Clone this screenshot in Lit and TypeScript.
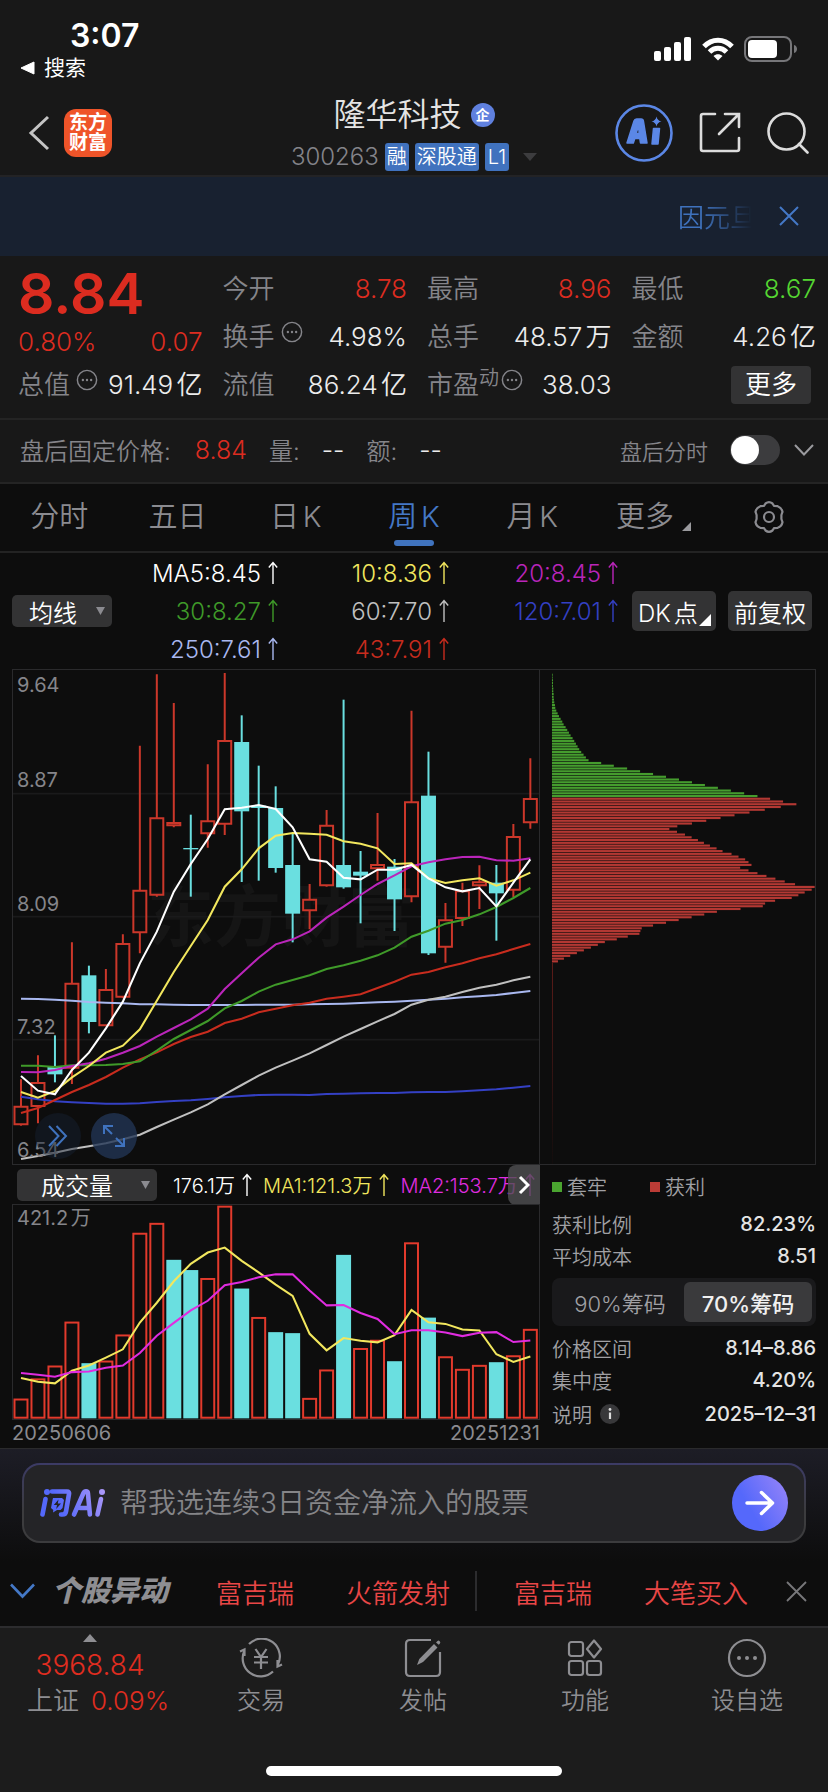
import { LitElement, html, svg, css, nothing } from "lit";
import { customElement, state } from "lit/decorators.js";
import { classMap } from "lit/directives/class-map.js";

type Candle = [top: number, bottom: number, high: number, low: number, up: 0 | 1];

/* Chart units: one third of a pixel, first candle centred at 62, step 51. */
const X0 = 62;
const STEP = 51;
const BODY = 43;

const CANDLES: Candle[] = [
  [1338, 1395, 1258, 1397, 1], [1267, 1340, 1186, 1390, 1], [1221, 1243, 1126, 1267, 0],
  [969, 1225, 847, 1272, 1], [946, 1086, 917, 1120, 0], [988, 1098, 927, 1098, 1],
  [850, 1012, 823, 1015, 1], [690, 819, 257, 880, 1], [473, 706, 43, 710, 1],
  [487, 498, 129, 502, 1], [564, 568, 464, 710, 0], [482, 522, 313, 563, 1],
  [241, 493, 39, 525, 1], [246, 454, 166, 666, 0], [437, 444, 317, 662, 0],
  [444, 624, 379, 638, 0], [615, 761, 522, 847, 0], [717, 753, 672, 808, 1],
  [495, 678, 450, 680, 1], [615, 682, 119, 686, 0], [635, 647, 573, 790, 0],
  [613, 627, 459, 662, 1], [620, 718, 597, 813, 0], [425, 711, 152, 727, 1],
  [407, 880, 275, 885, 0], [779, 862, 729, 908, 1], [692, 776, 668, 798, 1],
  [665, 678, 616, 747, 1], [668, 700, 615, 842, 0], [529, 691, 492, 712, 1],
  [415, 489, 295, 506, 1],
];

const AVERAGES: { color: string; points: number[] }[] = [
  { color: "#a9b8f0", points: [1016, 1017, 1019, 1022, 1026, 1028, 1030, 1033, 1033, 1034, 1035, 1035, 1035, 1035, 1034, 1034, 1034, 1033, 1032, 1031, 1029, 1027, 1025, 1022, 1019, 1016, 1012, 1009, 1005, 999, 993] },
  { color: "#3440c4", points: [1310, 1318, 1324, 1327, 1329, 1331, 1331, 1330, 1326, 1323, 1321, 1317, 1312, 1308, 1305, 1304, 1304, 1305, 1302, 1301, 1300, 1299, 1299, 1297, 1296, 1296, 1294, 1291, 1288, 1283, 1278] },
  { color: "#c0c0c0", points: [1497, 1488, 1478, 1467, 1459, 1450, 1438, 1424, 1401, 1379, 1357, 1333, 1303, 1275, 1247, 1223, 1202, 1180, 1155, 1130, 1107, 1084, 1062, 1034, 1019, 1010, 996, 983, 974, 961, 950] },
  { color: "#c82c1e", points: [1359, 1344, 1320, 1296, 1275, 1251, 1223, 1198, 1177, 1152, 1131, 1115, 1089, 1076, 1057, 1046, 1036, 1028, 1016, 1010, 1003, 984, 965, 944, 936, 922, 910, 895, 883, 867, 852] },
  { color: "#3f9a29", points: [1217, 1217, 1221, 1216, 1216, 1215, 1212, 1204, 1172, 1137, 1110, 1083, 1045, 1023, 995, 974, 960, 946, 927, 916, 902, 886, 863, 830, 812, 791, 780, 763, 741, 714, 684] },
  { color: "#ba25ba", points: [1236, 1237, 1230, 1218, 1210, 1196, 1178, 1158, 1130, 1104, 1078, 1046, 987, 940, 893, 853, 838, 814, 773, 740, 705, 672, 646, 619, 607, 598, 591, 590, 601, 602, 595] },
  { color: "#f2e75e", points: [1296, 1313, 1293, 1252, 1218, 1178, 1157, 1108, 1022, 936, 858, 780, 680, 628, 565, 527, 519, 521, 524, 544, 551, 565, 612, 610, 655, 669, 661, 655, 677, 661, 638] },
  { color: "#ffffff", points: [1248, 1292, 1303, 1230, 1178, 1105, 1025, 910, 815, 695, 612, 537, 448, 443, 435, 447, 502, 598, 605, 653, 658, 629, 629, 615, 655, 682, 694, 684, 739, 668, 598] },
];

const VOLUMES = [718, 657, 618, 485, 610, 603, 524, 216, 186, 297, 328, 353, 134, 384, 471, 516, 519, 716, 630, 282, 565, 540, 604, 245, 472, 590, 628, 616, 607, 587, 507];
const VOLUME_DOWN = new Set([4, 9, 10, 13, 15, 16, 19, 22, 24, 28]);
const VOLUME_LINES = [
  { color: "#f2e75e", points: [655, 666, 671, 633, 617, 593, 568, 487, 427, 362, 309, 275, 260, 300, 335, 372, 406, 521, 571, 534, 542, 547, 525, 449, 486, 491, 508, 511, 583, 606, 590] },
  { color: "#e02ce0", points: [640, 645, 651, 637, 635, 624, 617, 579, 527, 488, 450, 421, 374, 364, 350, 341, 341, 390, 435, 434, 458, 476, 522, 510, 510, 517, 528, 518, 516, 546, 541] },
];

/* Chip distribution, from the highest price to the lowest. */
const CHIPS_TRAPPED = [2, 2, 3, 3, 3, 4, 4, 5, 5, 6, 7, 9, 10, 13, 17, 21, 26, 31, 35, 41, 46, 51, 56, 62, 67, 72, 77, 82, 88, 95, 102, 110, 148, 186, 226, 265, 304, 343, 382, 421, 460, 499, 538, 578, 618];
const CHIPS_PROFIT = [656, 695, 735, 688, 640, 594, 549, 507, 464, 421, 377, 353, 376, 400, 420, 439, 457, 475, 495, 513, 540, 561, 581, 591, 600, 566, 591, 618, 645, 672, 700, 731, 790, 781, 760, 741, 721, 671, 641, 634, 567, 496, 458, 420, 381, 343, 304, 270, 266, 263, 228, 195, 159, 138, 117, 96, 75, 55, 36, 18];
const CHIP_STEP = 8.27;

const line = (points: number[]) => points.map((y, i) => `${X0 + STEP * i},${y}`).join(" ");

const upArrow = html`<svg class="up" viewBox="0 0 10 24" aria-hidden="true">
  <path d="M5 23V1.5M.8 6.5 5 1.5l4.2 5" fill="none" stroke="currentColor" stroke-width="1.4" />
</svg>`;

const caret = html`<svg width="9" height="8" viewBox="0 0 9 8" aria-hidden="true"><path d="M0 0h9L4.500 8z" fill="#8b8b90" /></svg>`;

const moreDots = html`<svg class="dots" viewBox="0 0 24 24" aria-hidden="true">
  <circle cx="12" cy="12" r="10.5" fill="none" stroke="currentColor" stroke-width="1.6" />
  <circle cx="7.5" cy="12" r="1.3" fill="currentColor" /><circle cx="12" cy="12" r="1.3" fill="currentColor" /><circle cx="16.5" cy="12" r="1.3" fill="currentColor" />
</svg>`;

const base = css`
  * { box-sizing: border-box; }
  button, input { font: inherit; color: inherit; letter-spacing: inherit; background: none; border: 0; margin: 0; padding: 0; }
  button { cursor: pointer; }
  a { color: inherit; text-decoration: none; }
  svg { display: block; flex: none; }
`;

@customElement("app-header")
class AppHeader extends LitElement {
  static styles = [base, css`
    :host { display: block; background: #181818; }
    .status { display: flex; justify-content: space-between; padding: 18px 30px 0 20px; height: 82px; }
    .time { padding-left: 50px; font-size: 32px; font-weight: 600; line-height: 36px; color: #fff; }
    .back-app { display: flex; align-items: center; gap: 8px; font-size: 21px; line-height: 28px; font-weight: 400; color: #fff; }
    .signals { display: flex; align-items: center; gap: 10px; height: 26px; margin-top: 18px; }
    .bar { display: grid; grid-template-columns: 1fr auto 1fr; align-items: center; height: 95px; padding: 8px 19px 0; border-bottom: 2px solid #232325; }
    .left { display: flex; align-items: center; gap: 14px; padding-left: 9px; }
    .logo { display: grid; align-content: center; justify-items: center; width: 48px; height: 48px; border-radius: 12px; background: #ef5429; color: #fff; font-size: 19px; line-height: 20px; font-weight: 700; }
    .center { display: grid; justify-items: center; row-gap: 9px; padding-top: 2px; }
    .name { display: flex; align-items: center; gap: 9px; margin: 0; font-size: 32px; line-height: 38px; font-weight: 350; color: #e4e4e4; }
    .ent { display: grid; place-items: center; width: 24px; height: 24px; border-radius: 50%; background: #5f80de; color: #fff; font-size: 14px; line-height: 16px; font-weight: 700; }
    .code { display: flex; align-items: center; gap: 6px; font-size: 24px; line-height: 28px; color: #84848a; font-weight: 350; }
    .tag { padding: 0 2px; border-radius: 3px; background: #4072be; color: #fff; font-size: 20px; line-height: 28px; }
    .tag.mono { padding: 0 3px; }
    .gap { margin-left: 8px; }
    .right { display: flex; align-items: center; justify-content: flex-end; gap: 26px; }
    .banner { display: flex; align-items: center; justify-content: flex-end; gap: 23px; height: 79px; padding: 0 29px 2px 0; background: #182130; color: #3f72bd; font-size: 26px; font-weight: 350; }
    .notice { white-space: nowrap; -webkit-mask-image: linear-gradient(90deg, #000 30%, transparent 95%); mask-image: linear-gradient(90deg, #000 30%, transparent 95%); }
  `];

  render() {
    return html`
      <div class="status">
        <div>
          <div class="time">3:07</div>
          <a class="back-app" href="#search"><svg width="16" height="14" viewBox="0 0 16 14"><path d="M1 7 14 1v12z" fill="#fff" stroke="#fff" stroke-linejoin="round" /></svg>搜索</a>
        </div>
        <div class="signals">
          <svg width="38" height="24" viewBox="0 0 38 24" fill="#fff"><rect x="0" y="14" width="7" height="10" rx="2" /><rect x="10" y="10" width="7" height="14" rx="2" /><rect x="20" y="5" width="7" height="19" rx="2" /><rect x="30" y="0" width="7" height="24" rx="2" /></svg>
          <svg width="32" height="24" viewBox="0 0 32 24" fill="none" stroke="#fff" stroke-width="5"><path d="M2 9.5C10 1 22 1 30 9.5" /><path d="M7.5 15c5-5 12-5 17 0" /><path d="M16 23.5 11.500 19c2.700-2.300 6.300-2.300 9 0z" fill="#fff" stroke="none" /></svg>
          <svg width="54" height="26" viewBox="0 0 54 26"><rect x="1" y="1" width="46" height="24" rx="7" fill="none" stroke="#77777a" stroke-width="2" /><rect x="4" y="4" width="29" height="18" rx="4" fill="#fff" /><path d="M50 9c4 1 4 7 0 8z" fill="#77777a" /></svg>
        </div>
      </div>
      <div class="bar">
        <div class="left">
          <button aria-label="返回"><svg width="22" height="36" viewBox="0 0 22 36"><path d="M20 2 3 18l17 16" fill="none" stroke="#c4c4c4" stroke-width="3" /></svg></button>
          <div class="logo"><span>东方</span><span>财富</span></div>
        </div>
        <div class="center">
          <h1 class="name">隆华科技<span class="ent">企</span></h1>
          <div class="code">300263 <span class="tag">融</span><span class="tag">深股通</span><span class="tag mono">L1</span>
            <svg class="gap" width="14" height="8" viewBox="0 0 14 8"><path d="M0 0h14L7 8z" fill="#3c3c3e" /></svg></div>
        </div>
        <div class="right">
          <button aria-label="AI 助手"><svg width="58" height="58" viewBox="0 0 58 58"><circle cx="29" cy="29" r="27.500" fill="none" stroke="#5b87e6" stroke-width="2.600" />
            <path fill="#5b87e6" stroke="#5b87e6" stroke-width="1.500" stroke-linejoin="round" fill-rule="evenodd" d="M12 39 19 17q.6-2 2.600-2h4.500q2 0 2.300 2l3.600 22h-6.500l-.7-4.500h-5L18.300 39zM21 29.500h3.200L23.600 22zM38.500 24.500h6L43 40h-6z" />
            <path fill="#5b87e6" d="M41.500 12.500q.8 4.200 5 5-4.200.8-5 5-.8-4.200-5-5 4.200-.8 5-5z" /></svg></button>
          <button aria-label="分享"><svg width="42" height="42" viewBox="0 0 42 42" fill="none" stroke="#dcdcdc" stroke-width="2.600" stroke-linecap="round"><path d="M16 2H4Q2 2 2 4v33q0 2 2 2h34q2 0 2-2V26M26 2h14v13M39.500 2.500 20 22" /></svg></button>
          <button aria-label="搜索"><svg width="42" height="42" viewBox="0 0 42 42" fill="none" stroke="#dcdcdc" stroke-width="2.600" stroke-linecap="round"><circle cx="19.500" cy="19.500" r="18" /><path d="m32 32 8.500 8.500" /></svg></button>
        </div>
      </div>
      <div class="banner">
        <div class="notice">因元旦</div>
        <button aria-label="关闭"><svg width="20" height="20" viewBox="0 0 20 20"><path d="m1 1 18 18M19 1 1 19" stroke="#4478c6" stroke-width="2" /></svg></button>
      </div>`;
  }
}

@customElement("app-quote")
class AppQuote extends LitElement {
  static styles = [base, css`
    :host { display: block; background: #181818; font-weight: 350; color: #85858a; }
    .grid { display: grid; grid-template-columns: repeat(4, minmax(0, 1fr)); column-gap: 20px; padding: 9px 12px 9px 18px; font-size: 26px; }
    .col { display: grid; grid-template-rows: 48px 48px 48px; align-items: center; }
    .col.main { grid-template-rows: 58px 38px 48px; }
    .row { display: flex; align-items: center; justify-content: space-between; white-space: nowrap; line-height: 36px; }
    .price { font-size: 57px; line-height: 58px; font-weight: 600; color: #dc2c20; }
    .num { font-size: 26px; color: #ececec; font-weight: 350; }
    .num.up { color: #dc2c20; }
    .num.down { color: #55d632; }
    .key { display: flex; align-items: center; }
    .dots { width: 22px; height: 22px; margin: 0 0 10px 6px; }
    .sup { font-size: 20px; line-height: 20px; margin-bottom: 14px; }
    .sup + .dots { margin-left: 2px; }
    .more { justify-self: end; width: 80px; height: 38px; margin-right: 5px; border-radius: 4px; background: #333334; color: #fff; font-size: 26px; line-height: 36px; }
    .after { display: flex; align-items: center; height: 66px; padding: 0 14px 3px 20px; border-top: 2px solid #242424; border-bottom: 2px solid #242424; font-size: 24px; }
    .after b { font-size: 25px; font-weight: 350; }
    .after .red { color: #dc2c20; margin: 0 22px 0 24px; }
    .after .dash { color: #ececec; margin: 0 22px; }
    .fill { flex: 1; }
    .switch { display: flex; align-items: center; gap: 22px; font-size: 22px; }
    .switch input { appearance: none; display: flex; align-items: center; width: 50px; height: 30px; padding: 1px; border-radius: 15px; background: #3c3c3e; }
    .switch input::before { content: ""; width: 28px; height: 28px; border-radius: 50%; background: #fff; }
    .switch input:checked { justify-content: flex-end; }
    .chev { margin-left: 14px; }
  `];

  render() {
    const row = (key: unknown, num: string, tone = "") =>
      html`<div class="row"><span class="key">${key}</span><span class="num ${tone}">${num}</span></div>`;
    return html`
      <div class="grid">
        <div class="col main">
          <div class="price">8.84</div>
          <div class="row"><span class="num up">0.80%</span><span class="num up">0.07</span></div>
          ${row(html`总值${moreDots}`, "91.49亿")}
        </div>
        <div class="col">${row("今开", "8.78", "up")}${row(html`换手${moreDots}`, "4.98%")}${row("流值", "86.24亿")}</div>
        <div class="col">${row("最高", "8.96", "up")}${row("总手", "48.57万")}${row(html`市盈<span class="sup">动</span>${moreDots}`, "38.03")}</div>
        <div class="col">${row("最低", "8.67", "down")}${row("金额", "4.26亿")}<button class="more">更多</button></div>
      </div>
      <div class="after">
        <span>盘后固定价格:</span><b class="red">8.84</b>
        <span>量:</span><b class="dash">--</b><span>额:</span><b class="dash">--</b>
        <span class="fill"></span>
        <label class="switch">盘后分时<input type="checkbox" role="switch" /></label>
        <button class="chev" aria-label="展开"><svg width="20" height="12" viewBox="0 0 20 12"><path d="m1 1 9 9.500L19 1" fill="none" stroke="#9a9a9e" stroke-width="2" /></svg></button>
      </div>`;
  }
}

@customElement("app-chart")
class AppChart extends LitElement {
  @state() private chips = "70";
  @state() private period = "周K";

  static styles = [base, css`
    :host { display: block; background: #0d0d0d; font-weight: 350; color: #8b8b90; }
    .tabs { display: grid; grid-template-columns: repeat(7, minmax(0, 1fr)); height: 69px; border-bottom: 2px solid #232323; }
    .tab { display: grid; grid-template-rows: 1fr 6px; justify-items: center; align-items: center; padding: 10px 0 5px; font-size: 29px; line-height: 40px; color: #8b8b90; }
    .tab::after { content: ""; width: 40px; height: 6px; border-radius: 3px; }
    .tab.on { color: #4478c6; }
    .tab.on::after { background: #4073be; }
    .with-mark { display: flex; align-items: flex-end; gap: 8px; padding-left: 6px; }
    .mark { margin-bottom: 6px; }
    .averages { display: grid; grid-template-columns: 100px 1fr auto auto; align-items: center; height: 116px; padding: 0 16px 0 12px; }
    .chip-btn { background: #333334; border-radius: 5px; color: #fff; font-size: 24px; }
    .drop { display: flex; align-items: center; justify-content: space-between; height: 32px; padding: 0 7px 0 17px; }
    .values { display: grid; grid-template-columns: 166px 171px 169px; grid-auto-rows: 38px; align-items: center; font-size: 24px; }
    .value { display: flex; align-items: center; justify-content: flex-end; gap: 7px; }
    .up { width: 10px; height: 24px; }
    .tall { position: relative; width: 84px; height: 40px; white-space: nowrap; }
    .tall.pick { padding-left: 6px; text-align: left; }
    .tall + .tall { margin-left: 12px; }
    .corner { position: absolute; right: 5px; bottom: 5px; }
    .body { display: grid; grid-template-columns: minmax(0, 528fr) minmax(0, 276fr); padding: 0 12px; }
    .candles { position: relative; height: 496px; border: 1px solid #2a2a2c; }
    .candles > svg, .volume > svg { position: absolute; inset: 0; width: 100%; height: 100%; }
    .chips-plot { height: 496px; border: 1px solid #2a2a2c; border-left: 0; }
    .chips-plot svg { width: 100%; height: 100%; }
    .watermark { position: absolute; top: 207px; left: 134px; font-size: 67px; line-height: 80px; font-weight: 700; color: #151515; }
    .scale { position: absolute; left: 4px; font-size: 20px; line-height: 24px; font-weight: 400; color: #85858a; }
    .s0 { top: 3px; } .s1 { top: 98px; } .s2 { top: 222px; } .s3 { top: 345px; } .s4 { top: 468px; }
    .tool { position: absolute; bottom: 5px; width: 46px; height: 46px; border-radius: 50%; display: grid; place-items: center; }
    .fast { left: 22px; background: rgba(22, 34, 52, .45); }
    .full { left: 78px; background: rgba(34, 52, 84, .8); }
    .volhead { position: relative; display: flex; align-items: center; height: 39px; padding-left: 5px; font-size: 20px; white-space: nowrap; overflow: hidden; text-autospace: no-autospace; }
    .volname { width: 140px; padding-left: 24px; margin-right: 16px; flex: none; }
    .volhead .value { margin-right: 11px; }
    .next { position: absolute; right: 0; top: 0; width: 32px; height: 40px; border-radius: 8px 0 0 8px; background: rgba(80, 80, 82, .8); display: grid; place-items: center; }
    .volume { position: relative; height: 216px; border: 1px solid #2a2a2c; }
    .volume .s0 { top: 1px; }
    .dates { display: flex; justify-content: space-between; padding: 1px 0 3px; font-size: 20px; line-height: 24px; font-weight: 400; }
    .info { padding: 0 0 0 12px; font-size: 20px; color: #a0a0a4; }
    .legend { display: flex; align-items: center; gap: 5px; height: 43px; }
    .sq { width: 10px; height: 10px; background: #4aa530; }
    .sq.red { background: #bb3c36; margin-left: 38px; }
    .line { display: flex; align-items: center; justify-content: space-between; height: 32px; }
    .line b { color: #e4e4e4; font-weight: 500; }
    .line span { display: flex; align-items: center; gap: 8px; }
    .line.last { height: 36px; }
    .seg { display: grid; grid-template-columns: 1fr 1fr; height: 48px; margin: 6px 0; padding: 4px; border-radius: 8px; background: #19191b; font-size: 22px; text-autospace: no-autospace; }
    .seg button { border-radius: 6px; color: #a0a0a4; }
    .seg button.on { background: #3a3a3c; color: #f0f0f0; font-weight: 500; }
    .c-white { color: #fff; } .c-yellow { color: #f2e75e; } .c-magenta { color: #ba25ba; } .c-pink { color: #e02ce0; } .c-green { color: #3f9a29; }
    .c-gray { color: #c0c0c0; } .c-blue { color: #3440c4; } .c-sky { color: #a9b8f0; } .c-red { color: #c82c1e; }
  `];

  private value(text: string, tone: string) {
    return html`<span class="value ${tone}">${text}${upArrow}</span>`;
  }

  private candle([top, bottom, high, low, up]: Candle, i: number) {
    const x = X0 + STEP * i;
    if (!up) {
      return svg`<rect x=${x - 3} y=${high} width="6" height=${low - high} fill="#6adfe0" /><rect x=${x - 22.5} y=${top} width="45" height=${bottom - top} fill="#6adfe0" />`;
    }
    return svg`<path d="M${x} ${high}V${top}M${x} ${bottom}V${low}M${x - BODY / 2 + 2} ${top + 2}h${BODY - 4}V${bottom - 2}h${4 - BODY}z" fill="none" stroke="#cb372a" stroke-width="6" />`;
  }

  private tab(name: string) {
    return html`<button class=${classMap({ tab: true, on: this.period === name })} @click=${() => (this.period = name)}>${name}</button>`;
  }

  render() {
    const trappedTop = 408 - (CHIPS_TRAPPED.length - 1) * CHIP_STEP;
    const chip = (y: number, w: number, fill: string) =>
      svg`<rect x="36" y=${(y - 3).toFixed(1)} width=${w} height="6.400" fill=${fill} />`;
    return html`
      <nav class="tabs">
        ${["分时", "五日", "日K", "周K", "月K"].map((t) => this.tab(t))}
        <button class="tab"><span class="with-mark">更多<svg class="mark" width="9" height="9" viewBox="0 0 9 9"><path d="M9 0v9H0z" fill="#9a9a9e" /></svg></span></button>
        <button class="tab" aria-label="设置"><svg width="34" height="34" viewBox="0 0 34 34" fill="none" stroke="#8b8b90" stroke-width="2.200" stroke-linejoin="round"><path d="M13.500 3.500q3.500-2.600 7 0l1.500 2.300 3.700.4q4 1.500 4.800 5.600L29.400 15v4l1.100 3.200q-.8 4.100-4.800 5.600l-3.700.4-1.500 2.300q-3.500 2.600-7 0L12 28.200l-3.700-.4q-4-1.500-4.800-5.600L4.600 19v-4l-1.100-3.200q.8-4.100 4.800-5.600l3.700-.4z" /><circle cx="17" cy="17" r="5" /></svg></button>
      </nav>
      <div class="averages">
        <button class="chip-btn drop">均线${caret}</button>
        <div class="values">
          ${this.value("MA5:8.45", "c-white")}${this.value("10:8.36", "c-yellow")}${this.value("20:8.45", "c-magenta")}
          ${this.value("30:8.27", "c-green")}${this.value("60:7.70", "c-gray")}${this.value("120:7.01", "c-blue")}
          ${this.value("250:7.61", "c-sky")}${this.value("43:7.91", "c-red")}
        </div>
        <button class="chip-btn tall pick">DK点<svg class="corner" width="12" height="12" viewBox="0 0 12 12"><path d="M12 0v12H0z" fill="#fff" /></svg></button>
        <button class="chip-btn tall">前复权</button>
      </div>
      <div class="body">
        <div class="candles">
          <div class="watermark" aria-hidden="true">东方财富</div>
          <svg viewBox="38 30 1580 1482" preserveAspectRatio="none">
            ${[401, 770, 1139].map((y) => svg`<path d="M38 ${y}H1620" stroke="#1a1a1b" stroke-width="5" />`)}
            ${CANDLES.map((c, i) => this.candle(c, i))}
            ${AVERAGES.map((a) => svg`<polyline points=${line(a.points)} fill="none" stroke=${a.color} stroke-width="6.200" />`)}
          </svg>
          ${["9.64", "8.87", "8.09", "7.32", "6.54"].map((s, i) => html`<span class="scale s${i}">${s}</span>`)}
          <button class="tool fast" aria-label="快进"><svg width="20" height="22" viewBox="0 0 20 22" fill="none" stroke="#3f72bd" stroke-width="2"><path d="m1 1 9.500 10L1 21M8.500 1 18 11 8.500 21" /></svg></button>
          <button class="tool full" aria-label="全屏"><svg width="24" height="24" viewBox="0 0 24 24" fill="none" stroke="#3f72bd" stroke-width="2"><path d="M2 10V2h9M2 2l8 8M22 14v8h-9M22 22l-8-8" /></svg></button>
        </div>
        <div class="chips-plot">
          <svg viewBox="0 30 827 1482" preserveAspectRatio="none">
            <defs><linearGradient id="fade" x1="0" y1="0" x2="0" y2="1"><stop offset="0" stop-color="#5e1c19" /><stop offset="1" stop-color="#120d0d" /></linearGradient></defs>
            ${CHIPS_TRAPPED.map((w, i) => chip(trappedTop + i * CHIP_STEP, w, "#459c2e"))}
            ${CHIPS_PROFIT.map((w, i) => chip(416 + i * CHIP_STEP, w, "#b33833"))}
            <rect x="36" y="908" width="3" height="604" fill="url(#fade)" />
          </svg>
        </div>
        <div>
          <div class="volhead">
            <button class="chip-btn drop volname">成交量${caret}</button>
            ${this.value("176.1万", "c-white")}${this.value("MA1:121.3万", "c-yellow")}${this.value("MA2:153.7万", "c-pink")}
            <button class="next" aria-label="下一项"><svg width="12" height="20" viewBox="0 0 12 20"><path d="m2 2 8 8-8 8" fill="none" stroke="#fff" stroke-width="3" /></svg></button>
          </div>
          <div class="volume">
            <svg viewBox="38 131 1580 648" preserveAspectRatio="none">
              ${VOLUMES.map((y, i) => {
                const x = X0 + STEP * i;
                return VOLUME_DOWN.has(i)
                  ? svg`<rect x=${x - 22.5} y=${y} width="45" height=${777 - y} fill="#6adfe0" />`
                  : svg`<rect x=${x - 19.5} y=${y + 2} width="39" height=${773 - y} fill="none" stroke="#e23a2c" stroke-width="6" />`;
              })}
              ${VOLUME_LINES.map((a) => svg`<polyline points=${line(a.points)} fill="none" stroke=${a.color} stroke-width="6.200" />`)}
            </svg>
            <span class="scale s0">421.2万</span>
          </div>
          <div class="dates"><span>20250606</span><span>20251231</span></div>
        </div>
        <div class="info">
          <div class="legend"><i class="sq"></i>套牢<i class="sq red"></i>获利</div>
          <div class="line"><span>获利比例</span><b>82.23%</b></div>
          <div class="line"><span>平均成本</span><b>8.51</b></div>
          <div class="seg">
            ${["90", "70"].map((v) => html`<button class=${this.chips === v ? "on" : nothing} @click=${() => (this.chips = v)}>${v}%筹码</button>`)}
          </div>
          <div class="line"><span>价格区间</span><b>8.14–8.86</b></div>
          <div class="line"><span>集中度</span><b>4.20%</b></div>
          <div class="line last"><span>说明<svg width="20" height="20" viewBox="0 0 20 20"><circle cx="10" cy="10" r="10" fill="#38383a" /><circle cx="10" cy="5.500" r="1.400" fill="#ddd" /><path d="M10 8.500v6.500" stroke="#ddd" stroke-width="2.200" /></svg></span><b>2025–12–31</b></div>
        </div>
      </div>`;
  }
}

@customElement("app-footer")
class AppFooter extends LitElement {
  static styles = [base, css`
    :host { display: flex; flex-direction: column; flex: 1; font-weight: 350; background: #0d0d0d; }
    .ask { padding: 14px 22px 18px; border-top: 1px solid #2a2a2c; background: linear-gradient(#1d1d26, #0d0d0d); text-autospace: no-autospace; }
    .box { display: flex; align-items: center; gap: 14px; height: 80px; padding: 0 16px; border: 2px solid transparent; border-radius: 18px; background: linear-gradient(#242427, #242427) padding-box, linear-gradient(#3c3b66, #3c3c3e 60%) border-box; }
    .brand { display: flex; align-items: center; }
    .ask-text { flex: 1; min-width: 0; height: 40px; font-size: 28px; outline: none; color: #fff; }
    .ask-text::placeholder { color: #858588; opacity: 1; }
    .send { display: grid; place-items: center; width: 56px; height: 56px; border-radius: 50%; background: linear-gradient(60deg, #5568fb 35%, #9a86f8); }
    .alerts { display: flex; align-items: center; height: 60px; padding: 0 21px 0 10px; margin-bottom: 5px; font-size: 26px; color: #e84646; white-space: nowrap; }
    .alerts h2 { margin: 0 48px 0 17px; font-size: 29px; line-height: 40px; font-weight: 900; font-style: italic; color: #8e8e92; }
    .pair { display: flex; gap: 52px; }
    .sep { width: 2px; height: 40px; margin: 0 37px 0 25px; background: #2c2c2e; }
    .close { margin-left: auto; }
    .nav { display: grid; grid-template-columns: 180fr 162fr 162fr 162fr 162fr; flex: 1; align-content: start; padding-top: 6px; border-top: 2px solid #2c2c2e; background: #1c1c1c; color: #8e8e92; }
    .item { display: flex; flex-direction: column; align-items: center; font-size: 24px; line-height: 34px; padding-top: 4px; gap: 6px; }
    .index { display: flex; flex-direction: column; align-items: center; font-size: 26px; line-height: 34px; }
    .index .point { font-size: 28px; line-height: 38px; margin-top: 4px; }
    .index .pair { gap: 12px; padding-left: 16px; }
    .red { color: #e02d20; }
    .home { width: 296px; height: 10px; margin: 0 auto; border-radius: 5px; background: #fff; }
    .base { background: #1c1c1c; padding-bottom: 16px; }
  `];

  render() {
    const g = { stroke: "#8e8e92" };
    return html`
      <div class="ask"><form class="box" @submit=${(e: Event) => e.preventDefault()}>
        <svg class="brand" width="66" height="30" viewBox="0 0 66 30" role="img" aria-label="问Ai">
          <defs><linearGradient id="ai" gradientUnits="userSpaceOnUse" x1="0" y1="30" x2="66" y2="0"><stop offset=".3" stop-color="#5468fa" /><stop offset="1" stop-color="#b09af8" /></linearGradient></defs>
          <g fill="none" stroke="url(#ai)" stroke-width="4.600" stroke-linecap="round" stroke-linejoin="round">
            <path d="M5.500 11 2.500 26.500M12 3.500h15q2.500 0 2 2.500l-3 17.500q-.5 3-3.500 3h-1.500" />
            <path d="M34 26.500 43.500 5q.8-1.700 2.500-1.700t1.900 1.700l2 21.500M40 20h8.500" />
            <path d="m61 11-3.500 15.500" />
          </g>
          <g fill="url(#ai)"><circle cx="7" cy="4" r="3" /><circle cx="62" cy="4" r="3" />
            <path fill-rule="evenodd" d="M13 10h9l2 2-1.500 8-2 2H17l-4 2.500.3-2.500-2.300-2 1.500-8zM18.500 11.500 13.800 17H17l-.8 4 4.800-5.500h-3.200z" /></g>
        </svg>
        <input class="ask-text" aria-label="提问" placeholder="帮我选连续3日资金净流入的股票" />
        <button class="send" aria-label="发送"><svg width="30" height="26" viewBox="0 0 30 26" fill="none" stroke="#fff" stroke-width="3.500" stroke-linecap="round" stroke-linejoin="round"><path d="M2 13h25M16.500 2.500 27.500 13 16.500 23.500" /></svg></button>
      </form></div>
      <div class="alerts">
        <button aria-label="收起"><svg width="25" height="16" viewBox="0 0 25 16"><path d="m1 1.500 11.500 12L24 1.500" fill="none" stroke="#4478c6" stroke-width="2.600" /></svg></button>
        <h2>个股异动</h2>
        <a class="pair" href="#a1"><span>富吉瑞</span><span>火箭发射</span></a>
        <i class="sep"></i>
        <a class="pair" href="#a2"><span>富吉瑞</span><span>大笔买入</span></a>
        <button class="close" aria-label="关闭"><svg width="21" height="21" viewBox="0 0 21 21"><path d="m1 1 19 19M20 1 1 20" stroke="#77777a" stroke-width="1.800" /></svg></button>
      </div>
      <nav class="nav">
        <a class="index" href="#index">
          <svg width="14" height="8" viewBox="0 0 14 8"><path d="M7 0l7 8H0z" fill="#8e8e92" /></svg>
          <span class="red point">3968.84</span>
          <span class="pair"><span>上证</span><span class="red">0.09%</span></span>
        </a>
        <a class="item" href="#trade"><svg width="44" height="40" viewBox="0 0 44 40" fill="none" stroke=${g.stroke} stroke-width="2.200"><path d="M10 6A18 18 0 0 1 38.500 27.500M34 33.500A18 18 0 0 1 5.500 12.500M1 13.500l4.500-2V18M43 26.500l-4.500 2V22" /><path d="m16.500 11 5.500 8 5.500-8M22 19v12M15 19h14M15 24.500h14" /></svg>交易</a>
        <a class="item" href="#post"><svg width="38" height="40" viewBox="0 0 38 40" fill="none" stroke=${g.stroke} stroke-width="2.200"><path d="M27 2H6Q2 2 2 6v28q0 4 4 4h26q4 0 4-4V14" /><path d="m13 27 2.300-6L30 6l3.500 3.500L19 24zM32 4.500l1.500-1.500q1-1 2.200.2t.2 2.300L34.800 6.800z" fill=${g.stroke} stroke="none" /></svg>发帖</a>
        <a class="item" href="#tools"><svg width="36" height="40" viewBox="0 0 36 40" fill="none" stroke=${g.stroke} stroke-width="2.200"><rect x="2" y="4" width="14" height="14" rx="2.500" /><rect x="2" y="23" width="14" height="14" rx="2.500" /><rect x="20" y="23" width="14" height="14" rx="2.500" /><path d="m27 2.500 7 8.500-7 8.500-7-8.500z" stroke-linejoin="round" /></svg>功能</a>
        <a class="item" href="#watch"><svg width="40" height="40" viewBox="0 0 40 40" fill="none" stroke=${g.stroke} stroke-width="2.200"><circle cx="20" cy="20" r="18" /><g fill=${g.stroke} stroke="none"><circle cx="12" cy="20" r="2" /><circle cx="20" cy="20" r="2" /><circle cx="28" cy="20" r="2" /></g></svg>设自选</a>
      </nav>
      <div class="base"><div class="home"></div></div>`;
  }
}

@customElement("app-root")
class AppRoot extends LitElement {
  static styles = css`
    :host { display: flex; flex-direction: column; min-height: 100vh; background: #0d0d0d; font-family: "Inter", "Noto Sans CJK SC", sans-serif; text-autospace: normal; }
  `;

  render() {
    return html`<app-header></app-header><app-quote></app-quote><app-chart></app-chart><app-footer></app-footer>`;
  }
}
